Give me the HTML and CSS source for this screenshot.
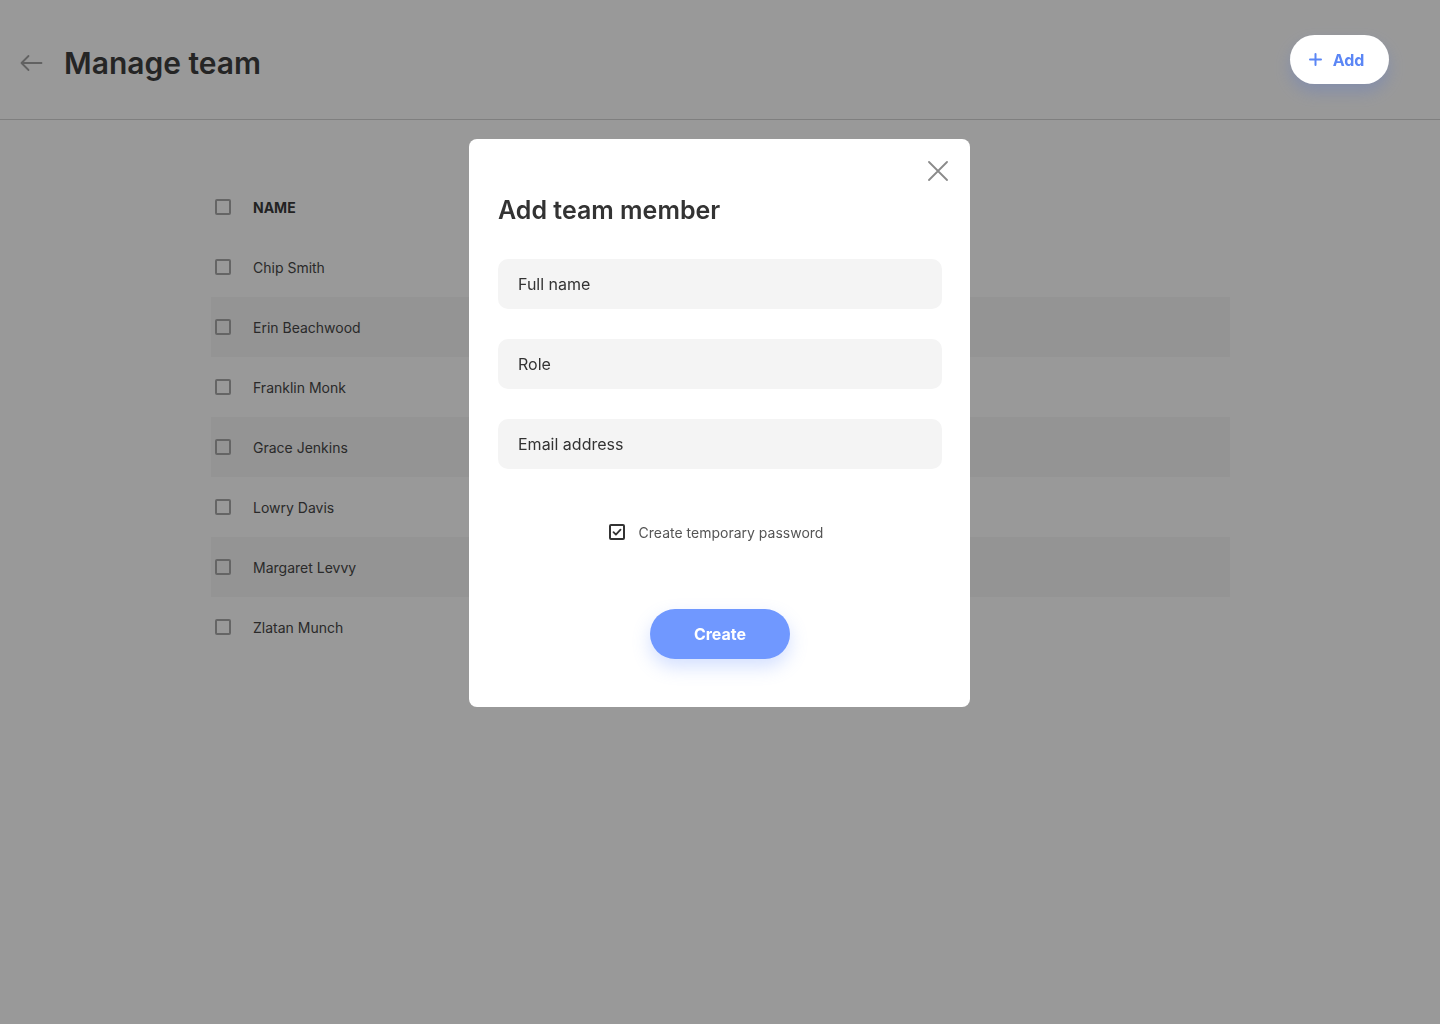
FILE: index.html
```html
<!DOCTYPE html>
<html lang="en">
<head>
<meta charset="utf-8">
<title>Manage team</title>
<link rel="stylesheet" href="styles.css">
</head>
<body>
  <header class="topbar">
    <div class="title-group">
      <svg class="back" width="23" height="18" viewBox="0 0 23 18" fill="none" stroke="currentColor" stroke-width="1.8" stroke-linecap="round" stroke-linejoin="round"><path d="M21.5 9H1.5M8.5 2L1.5 9l7 7"/></svg>
      <h1 class="page-title">Manage team</h1>
    </div>
  </header>

  <main class="content">
    <div class="table">
      <div class="row row-head"><span class="cb"></span><span class="cell-name head">NAME</span></div>
      <div class="row"><span class="cb"></span><span class="cell-name">Chip Smith</span></div>
      <div class="row striped"><span class="cb"></span><span class="cell-name">Erin Beachwood</span></div>
      <div class="row"><span class="cb"></span><span class="cell-name">Franklin Monk</span></div>
      <div class="row striped"><span class="cb"></span><span class="cell-name">Grace Jenkins</span></div>
      <div class="row"><span class="cb"></span><span class="cell-name">Lowry Davis</span></div>
      <div class="row striped"><span class="cb"></span><span class="cell-name">Margaret Levvy</span></div>
      <div class="row"><span class="cb"></span><span class="cell-name">Zlatan Munch</span></div>
    </div>
  </main>

  <div class="overlay"></div>

  <button class="add-btn" type="button">
    <svg width="13" height="13" viewBox="0 0 13 13" fill="none" stroke="currentColor" stroke-width="2" stroke-linecap="round"><path d="M6.5 1v11M1 6.5h11"/></svg>
    <span>Add</span>
  </button>

  <div class="modal-wrap">
    <div class="modal">
      <div class="modal-top">
        <button class="close" type="button" aria-label="Close">
          <svg width="20" height="20" viewBox="0 0 20 20" fill="none" stroke="currentColor" stroke-width="1.8" stroke-linecap="round"><path d="M1 1l18 18M19 1L1 19"/></svg>
        </button>
      </div>
      <h2 class="modal-title">Add team member</h2>
      <div class="fields">
        <input class="field" type="text" placeholder="Full name">
        <input class="field" type="text" placeholder="Role">
        <input class="field" type="text" placeholder="Email address">
      </div>
      <label class="check-row">
        <span class="mcb">
          <svg width="12" height="12" viewBox="0 0 12 12" fill="none" stroke="currentColor" stroke-width="1.8" stroke-linecap="round" stroke-linejoin="round"><path d="M2.5 6.2l2.4 2.4 4.6-5"/></svg>
        </span>
        <span class="check-label">Create temporary password</span>
      </label>
      <div class="actions">
        <button class="create" type="button">Create</button>
      </div>
    </div>
  </div>
</body>
</html>
```

FILE: styles.css
```css
* { box-sizing: border-box; }

html, body {
  margin: 0;
  padding: 0;
}

body {
  width: 1440px;
  height: 1024px;
  background: #ffffff;
  font-family: Inter, "Noto Sans", sans-serif;
  color: #444444;
  overflow: hidden;
}

.topbar {
  height: 120px;
  border-bottom: 1px solid #d4d4d4;
  display: flex;
  align-items: center;
  padding: 0 0 0 20px;
}

.title-group {
  display: flex;
  align-items: center;
  padding-top: 7px;
}

.back {
  color: #a3a3a3;
  margin-top: -1px;
}

.page-title {
  margin: 0 0 0 21px;
  font-size: 30px;
  line-height: 36px;
  font-weight: 600;
  color: #3f3f3f;
}

.content {
  padding: 57px 0 0 211px;
}

.table {
  width: 1019px;
  display: flex;
  flex-direction: column;
}

.row {
  height: 60px;
  display: flex;
  align-items: center;
  padding-left: 4px;
}

.row.striped {
  background: #f7f7f7;
}

.cb {
  width: 16px;
  height: 16px;
  border: 2px solid #a8a8a8;
  border-radius: 2px;
  flex: none;
}

.cell-name {
  margin-left: 22px;
  font-size: 14px;
  color: #474747;
}

.cell-name.head {
  font-weight: 700;
  color: #3a3a3a;
}

.overlay {
  position: fixed;
  inset: 0;
  background: rgba(0, 0, 0, 0.4);
  z-index: 1;
}

.add-btn {
  position: fixed;
  top: 35px;
  right: 51px;
  z-index: 2;
  width: 99px;
  height: 49px;
  border: none;
  border-radius: 25px;
  background: #ffffff;
  color: #5b86f5;
  font-family: Inter, "Noto Sans", sans-serif;
  font-size: 16px;
  font-weight: 700;
  display: flex;
  align-items: center;
  justify-content: center;
  gap: 11px;
  padding: 0 6px 0 0;
  box-shadow: 0 8px 16px rgba(93, 120, 200, 0.35);
}

.modal-wrap {
  position: fixed;
  inset: 0;
  z-index: 3;
  display: flex;
  justify-content: center;
  align-items: flex-start;
  padding: 139px 1px 0 0;
}

.modal {
  width: 501px;
  height: 568px;
  background: #ffffff;
  border-radius: 8px;
  padding: 22px 28px 48px 29px;
  display: flex;
  flex-direction: column;
}

.modal-top {
  display: flex;
  justify-content: flex-end;
  margin-right: -6px;
  height: 20px;
}

.close {
  width: 20px;
  height: 20px;
  padding: 0;
  border: none;
  background: none;
  color: #8a8a8a;
  display: flex;
}

.modal-title {
  margin: 13px 0 0 0;
  font-size: 25px;
  line-height: 32px;
  font-weight: 600;
  color: #333333;
}

.fields {
  margin-top: 33px;
  display: flex;
  flex-direction: column;
  gap: 30px;
}

.field {
  width: 444px;
  height: 50px;
  border: none;
  border-radius: 10px;
  background: #f4f4f4;
  padding: 0 20px;
  font-family: Inter, "Noto Sans", sans-serif;
  font-size: 16px;
  color: #333333;
  outline: none;
}

.field::placeholder {
  color: #333333;
  opacity: 1;
}

.check-row {
  margin-top: 53px;
  height: 20px;
  display: flex;
  align-items: center;
  justify-content: center;
  gap: 14px;
  padding-right: 8px;
}

.mcb {
  width: 16px;
  height: 16px;
  border: 2px solid #333333;
  border-radius: 2px;
  display: flex;
  align-items: center;
  justify-content: center;
  color: #333333;
}

.check-label {
  font-size: 14px;
  color: #555555;
}

.actions {
  margin-top: 67px;
  display: flex;
  justify-content: center;
}

.create {
  width: 140px;
  height: 50px;
  border: none;
  border-radius: 25px;
  background: #7098ff;
  color: #ffffff;
  font-family: Inter, "Noto Sans", sans-serif;
  font-size: 16px;
  font-weight: 700;
  padding-bottom: 1px;
  box-shadow: 0 8px 18px rgba(112, 152, 255, 0.3);
}
```
